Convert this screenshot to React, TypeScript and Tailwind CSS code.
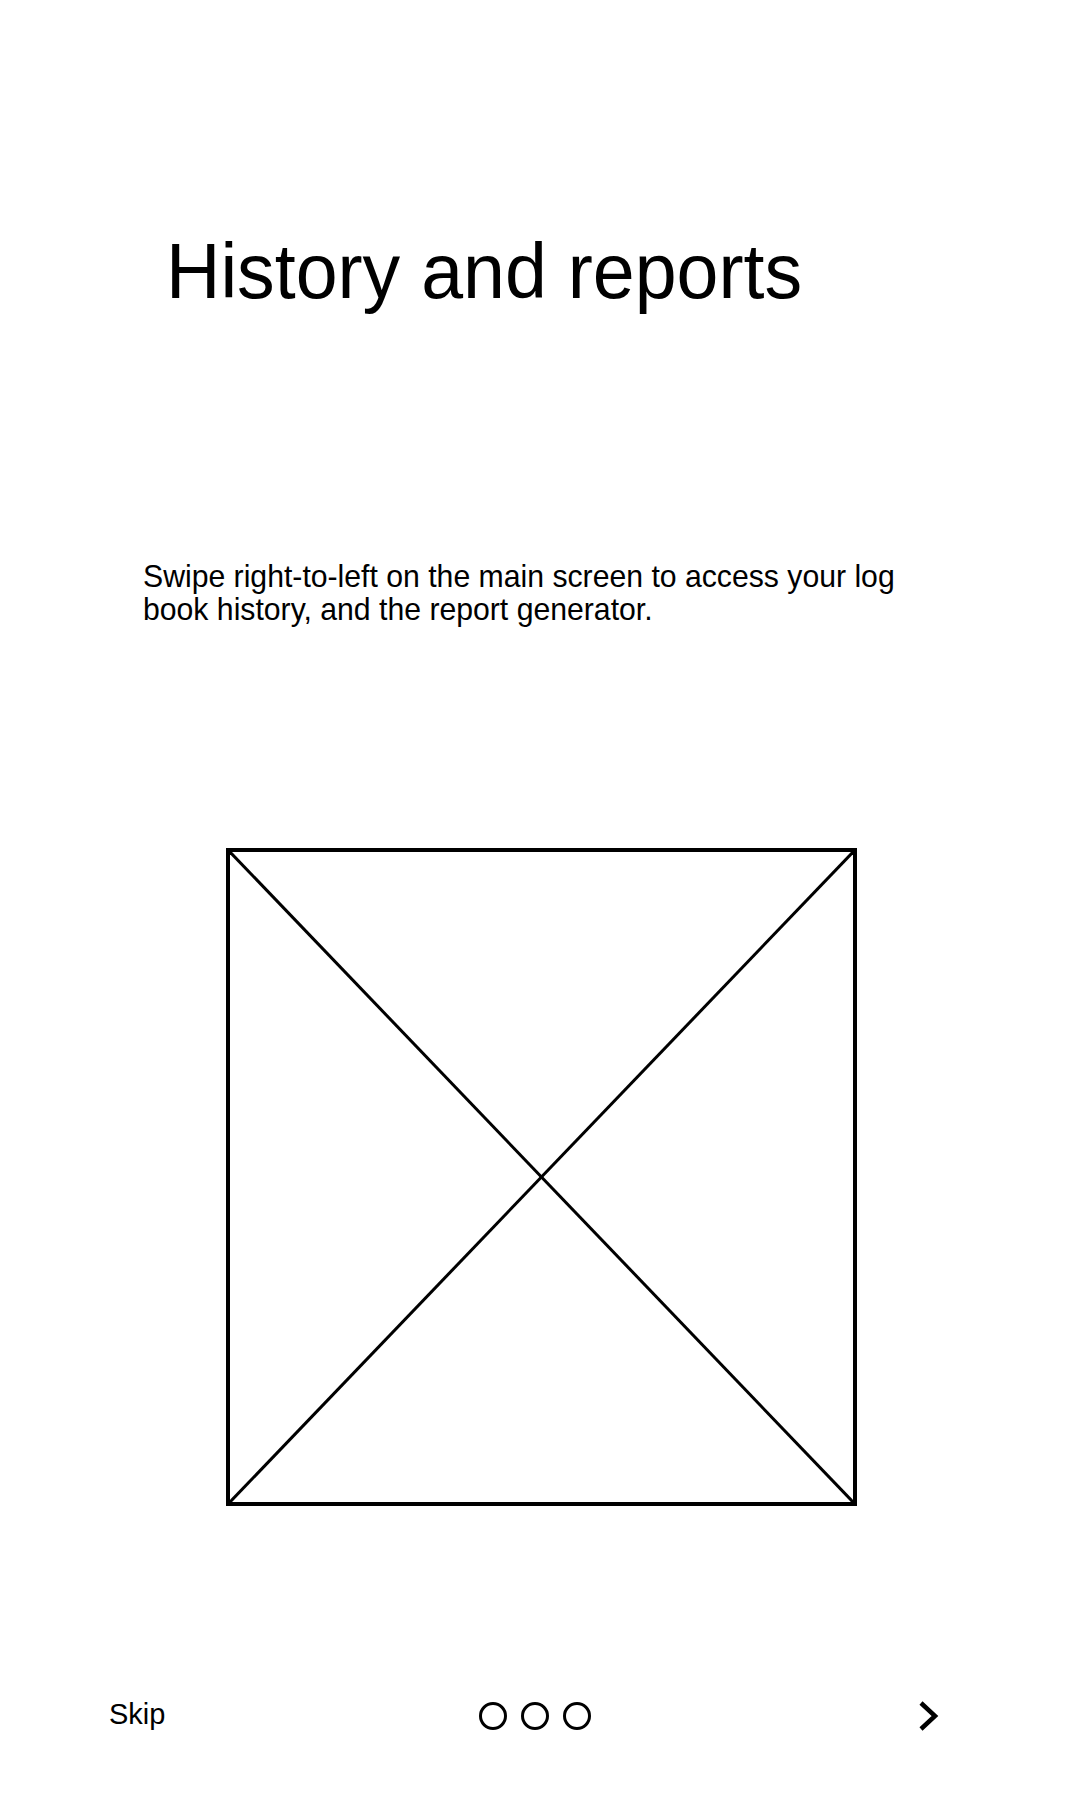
import React from 'react';

const App: React.FC = () => {
  return (
    <div className="min-h-screen w-full bg-white text-black font-['Liberation_Sans',Arial,sans-serif]">
      {/* Title */}
      <h1 className="pt-[232px] pl-[166px] text-[75.3px] leading-none font-normal">
        <span className="inline-block origin-top scale-y-[1.04]">History and reports</span>
      </h1>

      {/* Description */}
      <p className="mt-[253px] pl-[143px] w-[930px] text-[30.2px] leading-[31px] origin-top scale-y-[1.05]">
        Swipe right-to-left on the main screen to access your log book history, and the report generator.
      </p>

      {/* Image placeholder */}
      <div className="mt-[226px] ml-[226px] w-[631px] h-[658px] border-[4.5px] border-black relative">
        <svg className="absolute inset-0 w-full h-full" viewBox="0 0 622 649" preserveAspectRatio="none">
          <line x1="0" y1="0" x2="622" y2="649" stroke="black" strokeWidth="3" />
          <line x1="622" y1="0" x2="0" y2="649" stroke="black" strokeWidth="3" />
        </svg>
      </div>

      {/* Footer nav */}
      <div className="mt-[190px] flex items-center h-[40px] pl-[109px] pr-[140px]">
        <span className="text-[29px] leading-none -mt-[4px]">Skip</span>
        <div className="ml-[314px] flex items-center gap-[14px]">
          <span className="w-[28px] h-[28px] rounded-full border-[3px] border-black" />
          <span className="w-[28px] h-[28px] rounded-full border-[3px] border-black" />
          <span className="w-[28px] h-[28px] rounded-full border-[3px] border-black" />
        </div>
        <svg className="ml-auto" width="22" height="32" viewBox="0 0 22 32">
          <polyline points="3,3 17,16 3,29" fill="none" stroke="black" strokeWidth="4.5" />
        </svg>
      </div>
    </div>
  );
};

export default App;
